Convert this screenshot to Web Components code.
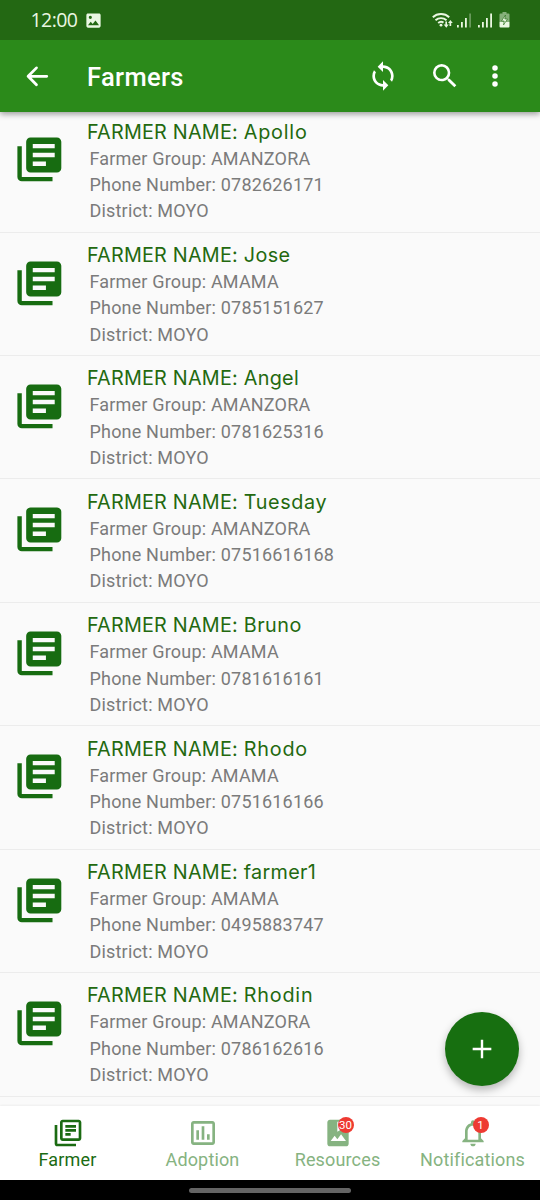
<!DOCTYPE html>
<html lang="en">
<head>
<meta charset="utf-8">
<title>Farmers</title>
<style>
html,body{margin:0;height:100%;overflow:hidden}
body{font-family:Roboto,"Open Sans",sans-serif;background:#fafafa}
</style>
</head>
<body>
<farm-app></farm-app>
<script>
const ICONS = {
  image: ['24','<path d="M21 19V5c0-1.1-.9-2-2-2H5c-1.1 0-2 .9-2 2v14c0 1.1.9 2 2 2h14c1.1 0 2-.9 2-2zM8.500 13.500l2.500 3 3.500-4.500 4.500 6H5l3.500-4.500zM8 6a2 2 0 1 1 0 4 2 2 0 0 1 0-4z" fill-rule="evenodd"/>'],
  back: ['24','<path d="M21 12.300H4.500M11.500 4.500L3.800 12.300l7.700 7.800" fill="none" stroke="currentColor" stroke-width="2.600" stroke-linecap="round" stroke-linejoin="round"/>'],
  sync: ['24','<path d="M12 4V1L8 5l4 4V6c3.310 0 6 2.690 6 6 0 1.010-.25 1.970-.7 2.800l1.460 1.460A7.930 7.930 0 0 0 20 12c0-4.420-3.580-8-8-8zm0 14c-3.310 0-6-2.690-6-6 0-1.010.25-1.970.7-2.800L5.240 7.740A7.930 7.930 0 0 0 4 12c0 4.420 3.580 8 8 8v3l4-4-4-4v3z"/>'],
  search: ['24','<path d="M15.500 14h-.79l-.28-.27A6.471 6.471 0 0 0 16 9.500 6.500 6.500 0 1 0 9.500 16c1.610 0 3.090-.59 4.230-1.570l.27.28v.79l5 4.990L20.490 19l-4.990-5zm-6 0C7.010 14 5 11.990 5 9.500S7.010 5 9.500 5 14 7.010 14 9.500 11.990 14 9.500 14z"/>'],
  more: ['24','<circle cx="12" cy="5.200" r="2.350"/><circle cx="12" cy="12" r="2.350"/><circle cx="12" cy="18.800" r="2.350"/>'],
  library: ['24','<path d="M4 6H2v14c0 1.100.9 2 2 2h14v-2H4V6zm16-4H8c-1.100 0-2 .9-2 2v12c0 1.100.9 2 2 2h12c1.100 0 2-.9 2-2V4c0-1.100-.9-2-2-2zm-1 9H9V9h10v2zm-4 4H9v-2h6v2zm4-8H9V5h10v2z"/>'],
  libraryOutline: ['24','<path d="M4 6H2v14c0 1.100.9 2 2 2h14v-2H4V6zm16-4H8c-1.100 0-2 .9-2 2v12c0 1.100.9 2 2 2h12c1.100 0 2-.9 2-2V4c0-1.100-.9-2-2-2zm0 14H8V4h12v12zM10 9h8v2h-8zm0 3h4v2h-4zm0-6h8v2h-8z"/>'],
  chart: ['24','<path d="M9 17H7v-7h2v7zm4 0h-2V7h2v10zm4 0h-2v-4h2v4zm2 2H5V5h14v14zm0-16H5c-1.100 0-2 .9-2 2v14c0 1.100.9 2 2 2h14c1.100 0 2-.9 2-2V5c0-1.100-.9-2-2-2z"/>'],
  album: ['24','<path fill-rule="evenodd" d="M18 2H6c-1.100 0-2 .9-2 2v16c0 1.100.9 2 2 2h12c1.100 0 2-.9 2-2V4c0-1.100-.9-2-2-2zM11.500 3.500H17V11l-2.750-1.700L11.500 11V3.500zM6.500 18l3-4 2 2.600 2.800-3.600L18 18H6.500z"/>'],
  bell: ['24','<path d="M12 22c1.100 0 2-.9 2-2h-4c0 1.100.9 2 2 2zm6-6v-5c0-3.070-1.630-5.640-4.500-6.320V4a1.500 1.500 0 0 0-3 0v.68C7.640 5.360 6 7.920 6 11v5l-2 2v1h16v-1l-2-2zm-2 1H8v-6c0-2.480 1.510-4.500 4-4.500s4 2.020 4 4.500v6z"/>'],
  plus: ['24','<path d="M19 12.900h-6.100V19h-1.800v-6.100H5v-1.800h6.100V5h1.800v6.100H19z"/>'],
  wifi: ['21 16','<g fill="none" stroke="currentColor" stroke-width="1.900"><path d="M.8 5.300a12 12 0 0 1 16.400 0M3.500 8.300a8.200 8.200 0 0 1 11-.1M6.200 11a4.300 4.300 0 0 1 5.300-.4"/></g><circle cx="9" cy="13.200" r="1.400"/><path d="M13.400 9.500v3h-1.700l2.600 3.200 2.400-3.200h-1.700v-3zM17.500 14v-3h-1.500l2.400-3 2.400 3h-1.600v3z"/>'],
  signal: ['15 15','<path d="M0 12h1.800v2.500H0zM4 9h1.800v5.500H4zM8 5h1.800v9.500H8z"/><path class="last" d="M12.200.5H14v14h-1.800z"/>'],
  battery: ['11 16','<path d="M3.500 0h4v1.500H9.500q1 0 1 1V10H.5V2.500q0-1 1-1h2z" opacity=".5"/><path d="M.5 10h10v4.500q0 1-1 1h-8q-1 0-1-1z"/><path d="M6.500 3L2.500 9h2.700l-.7 4 4-6H5.800z" stroke="#246b14" stroke-width=".6"/>']
};

function define(name, css, html, after) {
  const template = document.createElement('template');
  template.innerHTML = `<style>:host{box-sizing:border-box}*{box-sizing:border-box}${css}</style>${html}`;
  customElements.define(name, class extends HTMLElement {
    connectedCallback() {
      if (this.shadowRoot) return;
      this.attachShadow({mode: 'open'}).append(template.content.cloneNode(true));
      if (after) after(this, this.shadowRoot);
    }
  });
}

define('ui-icon', ':host{display:block;flex:none;width:var(--w,24px);height:var(--h,var(--w,24px))}svg{display:block;width:100%;height:100%;fill:currentColor}:host([weak]) .last{opacity:.35}', '<svg></svg>', (el, root) => {
  const [box, body] = ICONS[el.getAttribute('name')];
  const svg = root.querySelector('svg');
  svg.setAttribute('viewBox', '0 0 ' + (box.includes(' ') ? box : box + ' ' + box));
  svg.innerHTML = body;
});

define('status-bar', `
  :host{display:flex;align-items:center;height:40px;flex:none;background:#236813;color:#eaf7e2;padding:0 30px 0 30.5px;position:relative;z-index:3}
  .time{font:400 19.5px/40px "Open Sans",sans-serif;letter-spacing:-.55px;width:53px;white-space:nowrap}
  .right{margin-left:auto;display:flex;align-items:center}`,
  `<span class="time">12:00</span><ui-icon name="image" style="--w:19px"></ui-icon>
  <div class="right"><ui-icon name="wifi" style="--w:21px;--h:16px"></ui-icon>
  <ui-icon name="signal" weak style="--w:15px;margin-left:4px"></ui-icon>
  <ui-icon name="signal" style="--w:15px;margin-left:6px"></ui-icon>
  <ui-icon name="battery" style="--w:11px;--h:16px;margin-left:6px"></ui-icon></div>`);

define('app-bar', `
  :host{display:flex;align-items:center;height:72px;flex:none;background:#2b8a1a;color:#fff;padding:0 31px 0 24px;box-shadow:0 2px 6px rgba(0,0,0,.4);z-index:2;position:relative}
  h1{margin:1px auto 0 37px;font:500 25.5px/30px Roboto,sans-serif;letter-spacing:.35px}
  .tools{display:flex;align-items:center}`,
  `<ui-icon name="back" style="--w:26px"></ui-icon><h1><slot></slot></h1>
  <div class="tools"><ui-icon name="sync" style="--w:32px;margin-right:30.500px"></ui-icon><ui-icon name="search" style="--w:32px;margin-right:20px"></ui-icon><ui-icon name="more" style="--w:28px"></ui-icon></div>`);

define('farmer-row', `
  :host{display:flex;align-items:flex-start;height:123.43px;flex:none;border-bottom:1px solid #ececec;padding:24px 0 0 13px}
  ui-icon{color:#176c11}
  .text{margin:-15.700px 0 0 21.300px;white-space:nowrap}
  .name{font:400 19.8px/28px Inter,sans-serif;letter-spacing:.22px;color:#23690f}
  .line{font:400 18px/26.3px Roboto,sans-serif;color:#7b7b7b;padding-left:2.500px;letter-spacing:.19px}`,
  `<ui-icon name="library" style="--w:52.7px"></ui-icon><div class="text"><div class="name">FARMER NAME: <span id="n"><slot></slot></span></div>
  <div class="line">Farmer Group: <span id="g"></span></div><div class="line">Phone Number: <span id="p"></span></div><div class="line">District: MOYO</div></div>`,
  (el, root) => {
    root.getElementById('g').textContent = el.getAttribute('group');
    root.getElementById('p').textContent = el.getAttribute('phone');
    root.getElementById('n').style.letterSpacing = el.getAttribute('track') + 'px';
  });

define('nav-item', `
  :host{display:flex;flex-direction:column;align-items:center;flex:1;color:#86b381;padding:11px 0 0 0}
  :host([active]){color:#1b6b12}
  .icon{position:relative}
  .badge{position:absolute;left:16px;top:0;width:16px;height:16px;border-radius:50%;background:#ee3a32;color:#fff;font:400 11.5px/16px Roboto,sans-serif;text-align:center}
  .badge:empty{display:none}
  .label{font:400 18px/21px Roboto,sans-serif;letter-spacing:.15px}`,
  `<div class="icon"><span class="badge"></span></div><span class="label"><slot></slot></span>`,
  (el, root) => {
    const icon = document.createElement('ui-icon');
    icon.setAttribute('name', el.getAttribute('icon'));
    icon.style.setProperty('--w', '32px');
    root.querySelector('.icon').prepend(icon);
    root.querySelector('.badge').textContent = el.getAttribute('badge') || '';
  });

define('bottom-nav', ':host{display:flex;height:74px;flex:none;background:#fff;box-shadow:0 -1px 2px rgba(0,0,0,.05);position:relative}', '<slot></slot>');
define('gesture-bar', ':host{display:flex;height:20px;flex:none;background:#000;justify-content:center;padding-top:7.500px}i{width:162px;height:5.500px;border-radius:3px;background:#646464}', '<i></i>');
define('add-button', ':host{display:grid;place-items:center;position:absolute;left:445px;top:1012px;width:74px;height:74px;border-radius:50%;background:#176f10;color:#fff;box-shadow:0 4px 9px rgba(0,0,0,.28);z-index:3}', '<ui-icon name="plus" style="--w:32px"></ui-icon>');

const FARMERS = [
  ['Apollo','AMANZORA','0782626171',.8],['Jose','AMAMA','0785151627',.4],['Angel','AMANZORA','0781625316',.3],
  ['Tuesday','AMANZORA','07516616168',.65],['Bruno','AMAMA','0781616161',.5],['Rhodo','AMAMA','0751616166',.8],
  ['farmer1','AMAMA','0495883747',.3],['Rhodin','AMANZORA','0786162616',.8]
];
define('farm-app', `
  :host{display:flex;flex-direction:column;width:540px;height:1200px;position:relative;overflow:hidden;background:#fafafa}
  main{flex:1;min-height:0;overflow:hidden;display:flex;flex-direction:column}
  farmer-row:first-child{margin-top:-2.800px}`,
  `<status-bar></status-bar><app-bar>Farmers</app-bar>
  <main>${FARMERS.map(([n,g,p,t]) => `<farmer-row group="${g}" phone="${p}" track="${t}">${n}</farmer-row>`).join('')}</main>
  <bottom-nav><nav-item icon="libraryOutline" active>Farmer</nav-item><nav-item icon="chart">Adoption</nav-item><nav-item icon="album" badge="30">Resources</nav-item><nav-item icon="bell" badge="1">Notifications</nav-item></bottom-nav>
  <gesture-bar></gesture-bar><add-button></add-button>`);
</script>
</body>
</html>
